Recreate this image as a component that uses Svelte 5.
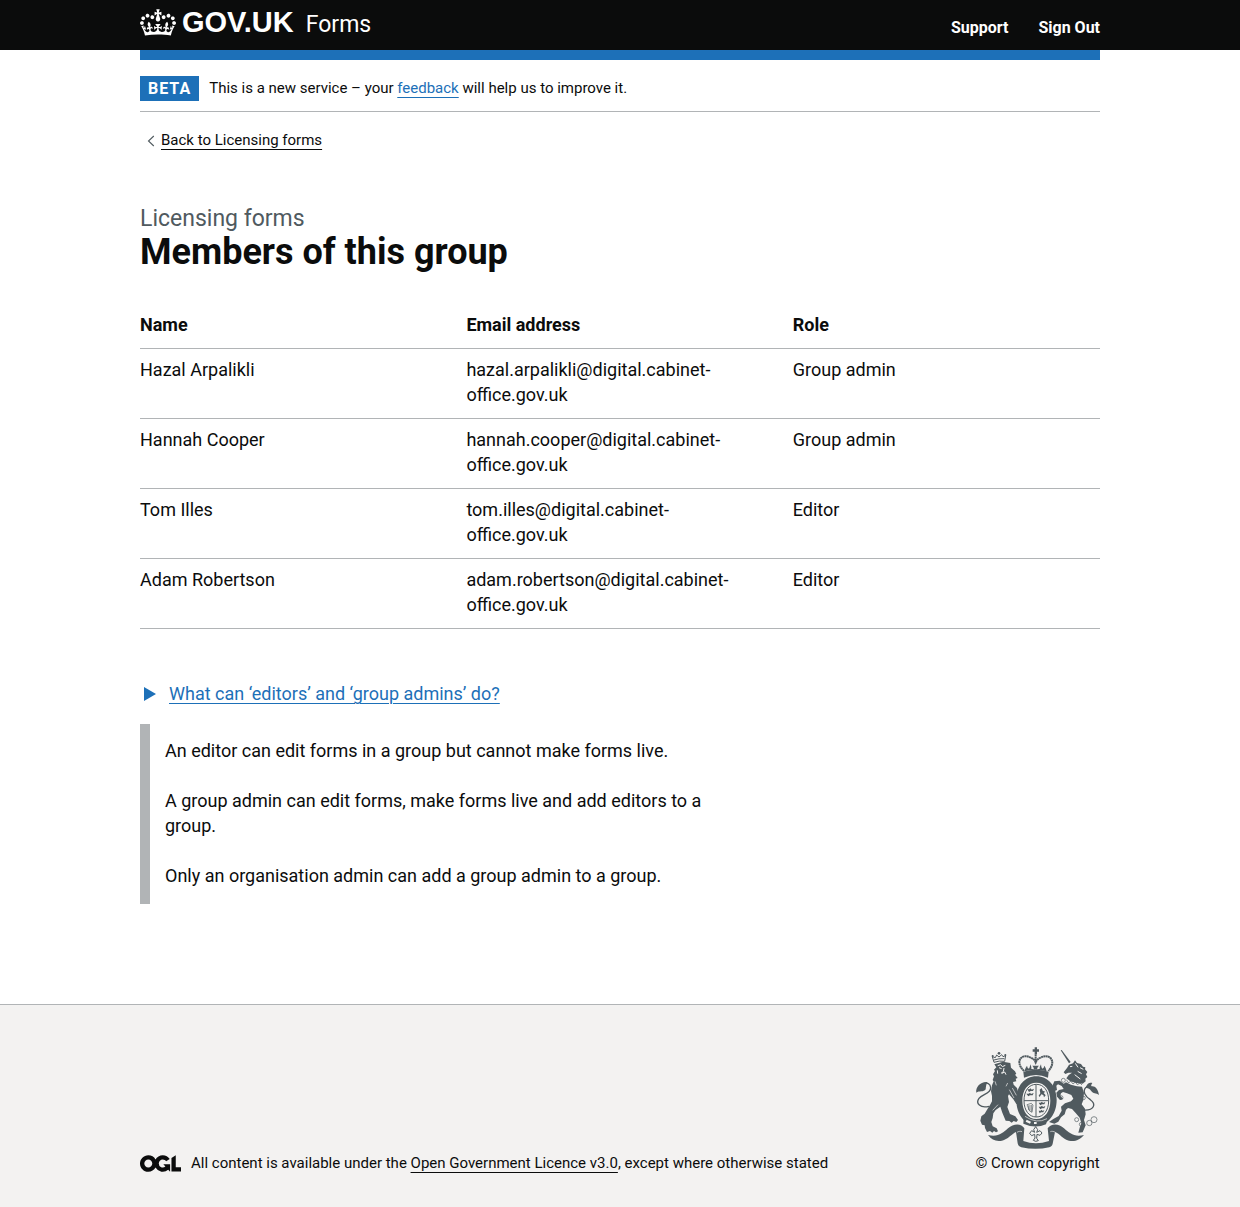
<script>
  const members = [
    { name: 'Hazal Arpalikli', email: 'hazal.arpalikli@digital.cabinet-office.gov.uk', role: 'Group admin' },
    { name: 'Hannah Cooper', email: 'hannah.cooper@digital.cabinet-office.gov.uk', role: 'Group admin' },
    { name: 'Tom Illes', email: 'tom.illes@digital.cabinet-office.gov.uk', role: 'Editor' },
    { name: 'Adam Robertson', email: 'adam.robertson@digital.cabinet-office.gov.uk', role: 'Editor' }
  ];
</script>

<header class="header">
  <div class="container header-inner">
    <a class="brand" href="#home">
      <svg class="crown" viewBox="0 0 132 97" width="36" height="27" aria-hidden="true">
        <path fill="currentColor" fill-rule="evenodd" d="M25 30.2c3.5 1.5 7.7-.2 9.1-3.7 1.5-3.6-.2-7.8-3.9-9.2-3.6-1.4-7.6.3-9.1 3.9-1.4 3.5.3 7.5 3.9 9zM9 39.5c3.6 1.5 7.8-.2 9.2-3.7 1.5-3.6-.2-7.8-3.9-9.1-3.6-1.5-7.6.2-9.1 3.8-1.4 3.5.3 7.5 3.8 9zM4.4 57.2c3.5 1.5 7.7-.2 9.1-3.8 1.5-3.6-.2-7.7-3.9-9.1-3.5-1.5-7.6.3-9.1 3.8-1.4 3.5.3 7.6 3.9 9.1zm38.3-21.4c3.5 1.5 7.7-.2 9.1-3.8 1.5-3.6-.2-7.7-3.9-9.1-3.6-1.5-7.6.3-9.1 3.8-1.3 3.6.4 7.7 3.9 9.1zm64.4-5.6c-3.6 1.5-7.8-.2-9.1-3.7-1.5-3.6.2-7.8 3.8-9.2 3.6-1.4 7.7.3 9.2 3.9 1.3 3.5-.4 7.5-3.9 9zm15.9 9.3c-3.6 1.5-7.7-.2-9.1-3.7-1.5-3.6.2-7.8 3.7-9.1 3.6-1.5 7.7.2 9.2 3.8 1.5 3.5-.3 7.5-3.8 9zm4.7 17.7c-3.6 1.5-7.8-.2-9.2-3.8-1.5-3.6.2-7.7 3.9-9.1 3.6-1.5 7.7.3 9.2 3.8 1.3 3.5-.4 7.6-3.9 9.1zM89.3 35.8c-3.6 1.5-7.8-.2-9.2-3.8-1.4-3.6.2-7.7 3.9-9.1 3.6-1.5 7.7.3 9.2 3.8 1.4 3.6-.3 7.7-3.9 9.1zM69.7 17.7l8.9 4.7V9.3l-8.9 2.8c-.2-.3-.5-.6-.9-.9L72.4 0H59.6l3.5 11.2c-.3.3-.6.5-.9.9l-8.8-2.8v13.1l8.8-4.7c.3.3.6.7.9.9l-5 15.4v.1c-.2.8-.4 1.6-.4 2.4 0 4.1 3.1 7.5 7 8.1h.2c.3 0 .7.1 1 .1.4 0 .7 0 1-.1h.2c4-.6 7.1-4.1 7.1-8.1 0-.8-.1-1.7-.4-2.4V34l-5.1-15.4c.4-.2.7-.6 1-.9zM66 92.8c16.9 0 32.8 1.1 47.1 3.2 4-16.9 8.9-26.7 14-33.5l-9.6-3.4c1 4.9 1.1 7.2 0 10.2-1.5-1.4-3-4.3-4.2-8.7L108.6 76c2.8-2 5-3.2 7.5-3.3-4.4 9.4-10 11.9-13.6 11.2-4.3-.8-6.3-4.6-5.6-7.9 1-4.7 5.7-5.9 8-.5 4.3-8.7-3-11.4-7.6-8.8 7.1-7.2 7.9-13.5 2.1-21.1-8 6.1-8.1 12.3-4.5 20.8-4.7-5.4-12.1-2.5-9.5 6.2 3.4-5.2 7.9-2 7.2 3.1-.6 4.3-6.4 7.8-13.5 7.2-10.3-.9-10.9-8-11.2-13.8 2.5-.5 7.1 1.8 11 7.3L80.2 60c-4.1 4.4-8 5.3-12.3 5.4 1.4-4.4 8-11.6 8-11.6H55.5s6.4 7.2 7.9 11.6c-4.2-.1-8-1-12.3-5.4l1.4 16.4c3.9-5.5 8.5-7.7 10.9-7.3-.3 5.8-.9 12.8-11.1 13.8-7.2.6-12.9-2.9-13.5-7.2-.7-5 3.8-8.3 7.1-3.1 2.7-8.7-4.6-11.6-9.4-6.2 3.7-8.5 3.6-14.7-4.6-20.8-5.8 7.6-5 13.9 2.2 21.1-4.7-2.6-11.9.1-7.7 8.8 2.3-5.5 7.1-4.2 8.1.5.7 3.3-1.3 7.1-5.7 7.9-3.5.7-9-1.8-13.5-11.2 2.5.1 4.7 1.3 7.5 3.3l-4.7-15.4c-1.2 4.4-2.7 7.2-4.3 8.7-1.1-3-.9-5.3 0-10.2l-9.5 3.4c5 6.9 9.9 16.7 14 33.5 14.8-2.1 30.8-3.2 47.7-3.2z" />
      </svg>
      <span class="wordmark">GOV.UK</span>
      <span class="product">Forms</span>
    </a>
    <nav class="header-nav" aria-label="Account">
      <a href="#support">Support</a>
      <a href="#sign-out">Sign Out</a>
    </nav>
  </div>
</header>

<div class="container">
  <div class="blue-bar"></div>
  <div class="phase">
    <strong class="tag">BETA</strong>
    <span>This is a new service – your <a class="link" href="#feedback">feedback</a> will help us to improve it.</span>
  </div>
  <div class="back">
    <svg viewBox="0 0 8 12" width="8" height="12" aria-hidden="true"><path d="M6.8 1 1.5 6l5.3 5" fill="none" stroke="#505a5f" stroke-width="1.1" /></svg>
    <a href="#group">Back to Licensing forms</a>
  </div>

  <main>
    <p class="caption">Licensing forms</p>
    <h1>Members of this group</h1>

    <table>
      <thead>
        <tr><th scope="col">Name</th><th scope="col">Email address</th><th scope="col">Role</th></tr>
      </thead>
      <tbody>
        {#each members as member}
          <tr><td>{member.name}</td><td>{member.email}</td><td>{member.role}</td></tr>
        {/each}
      </tbody>
    </table>

    <details open>
      <summary>
        <svg viewBox="0 0 12 14" width="12" height="14" aria-hidden="true"><path d="M0 0l12 7-12 7z" fill="currentColor" /></svg>
        <span>What can ‘editors’ and ‘group admins’ do?</span>
      </summary>
      <div class="details-text">
        <p>An editor can edit forms in a group but cannot make forms live.</p>
        <p>A group admin can edit forms, make forms live and add editors to a group.</p>
        <p>Only an organisation admin can add a group admin to a group.</p>
      </div>
    </details>
  </main>
</div>

<footer>
  <div class="container footer-inner">
    <div class="licence">
      <svg viewBox="0 0 483.2 195.7" width="41" height="17" aria-hidden="true">
        <path fill="currentColor" d="M421.5 142.8V.1l-50.7 32.3v161.1h112.4v-50.7zm-122.3-9.6A47.12 47.12 0 0 1 221 97.8c0-26 21.1-47.1 47.1-47.1 16.7 0 31.4 8.7 39.7 21.8l42.7-27.2A97.63 97.63 0 0 0 268.1 0c-36.5 0-68.3 20.1-85.1 49.7A98 98 0 0 0 97.8 0C43.9 0 0 43.9 0 97.8s43.9 97.8 97.8 97.8c36.5 0 68.3-20.1 85.1-49.7a97.76 97.76 0 0 0 149.6 25.4l19.4 22.2h3v-87.8h-80l24.3 27.5zM97.8 145c-26 0-47.1-21.1-47.1-47.1s21.1-47.1 47.1-47.1 47.1 21.1 47.1 47.1S123.8 145 97.8 145" />
      </svg>
      <span>All content is available under the <a href="#licence">Open Government Licence v3.0</a>, except where otherwise stated</span>
    </div>
    <a class="copyright" href="#copyright">
      <svg viewBox="46 35 375 312" width="125" height="104" aria-hidden="true">
        <g fill="#505a5f">
          <!-- central crown -->
          <path d="M225 36h7v6h6v7h-6v8h-7v-8h-6v-7h6zM191 109q38-11 76 0l-2 18q-36-16-72 0z" />
          <path d="M194 108q3-11 8-17 1 8 6 9 3-5 4-13 4 8 3 14l8 1q-1-7-5-11h20q-5 4-6 11l8-1q-1-6 4-14 0 8 4 13 5-2 6-9 5 6 7 17-33-9-67 0z" />
          <path d="M193 107C163 78 187 52 213 67q11 4 15 14 4-10 15-14c26-15 50 11 23 40M228 57v28" fill="none" stroke="#505a5f" stroke-width="6" stroke-dasharray="6 1" />
          <!-- ribbon -->
          <path d="M85 299c30 8 44-6 60-20 16-15 40-16 49 0l-3 38q37 14 77 0l-4-38c10-16 34-15 49 0 16 14 31 28 60 20-14 16-27 20-45 17-18-4-28-21-42-26l-7 35c-1 6-5 9-10 11q-41 9-84 0c-7-2-10-6-11-12l-5-34c-12 5-25 23-42 26-19 3-30-2-42-17z" />
          <path d="M172 291c4-3 11-4 15-2M287 291c-4-3-11-4-15-2" fill="none" stroke="#f3f2f1" stroke-width="2" />
          <!-- garter and shield -->
          <path fill-rule="evenodd" d="M230 123c36 0 61 30 61 71s-25 76-61 76-60-35-60-76 24-71 60-71zm0 19c-26 0-42 22-42 54s17 55 42 55 42-23 42-55-16-54-42-54z" />
          <path d="M230 147c23 0 37 20 37 49s-15 49-37 49-37-20-37-49 14-49 37-49zM229 147v98M193 196h74" fill="none" stroke="#505a5f" stroke-width="3" />
          <path d="M203 162h6l4-3 3 4 7-3-3 7h-7l-5 3zm-3 13h7l4-3 3 4 8-3-3 7h-8l-5 3zm37 27h6l4-3 3 4 7-3-3 7h-7l-5 3zm0 12h6l4-3 3 4 7-3-3 7h-7l-5 3zm0 12h6l3-3 3 4 5-3-3 7h-7l-4 3zM240 163l6-5 3 8 8 3-5 4 6 7-5 6-2-7-6-2-5 8-3-4 5-7z" />
          <path d="M202 208l13-4 5 5-3 22-7-4zM207 210v14M211 209v17M216 208v21" fill="none" stroke="#505a5f" stroke-width="2" />
          <path d="M192 247q38 24 72 4l-5 16q-33 14-68-2z" />
          <path fill="#f3f2f1" d="M201 253l13 6-3 6-13-6zm22 7h8v6h-8z" />
          <path d="M196 243q35 24 66 7" fill="none" stroke="#f3f2f1" stroke-width="2" />
          <!-- plant badge -->
          <path d="M228 274l6 9-3 8 10-5 6 7-6 7-9-3-1 12 5 7-8 2-7-3 5-7-1-11-9 4-6-7 6-8 9 5-3-8z" fill="none" stroke="#505a5f" stroke-width="3" />
          <!-- lion -->
          <path d="M103 81l-5-17 9 3 4-8 7 6 8-7 4 6 8-3-3 17q-16-3-32 3zM103 74q14-5 31-4" fill="none" stroke="#505a5f" stroke-width="3" />
          <circle cx="99" cy="62" r="3" /><circle cx="118" cy="54" r="4" /><circle cx="137" cy="59" r="3" />
          <path d="M104 87L130 79 152 83 154 97 166 108 170 116 166 118 174 128 168 130 170 138 160 140 162 148 172 158 177 177 187 188 185 199 179 207 170 206 161 192 148 177 145 182 148 200 143 215 151 236 167 243 175 254 170 260 162 257 156 262 149 257 138 256 128 232 122 214 108 224 101 234 99 248 95 260 99 273 111 279 115 288 109 291 103 287 98 292 91 287 82 290 76 278 75 270 67 268 62 256 65 243 75 235 83 222 91 209 97 198 97 182 94 168 97 150 102 138 99 134 103 123 100 117 106 107 103 103 110 96z" />
          <path d="M114 91l9-3 5 6 9-4M118 97l8 3M133 98l-2 11-7 5M127 114l8-4 4 8M113 105l1 10" fill="none" stroke="#f3f2f1" stroke-width="3" />
          <path d="M158 158l12 22M149 163l14 25M115 208l-16 17M106 138l4 12M144 143l-5 10" fill="none" stroke="#f3f2f1" stroke-width="2" />
          <path d="M88 213c-26 7-41-9-30-24 9-12 36-14 35-32-1-13-11-16-20-12" fill="none" stroke="#505a5f" stroke-width="4" />
          <path d="M84 140c-20-3-37 14-34 32 8-7 22 0 28-10 1-8 1-16 6-22z" />
          <!-- unicorn -->
          <path d="M303 45l3-1 27 36-5 4z" />
          <path d="M312 111L322 98 328 88 340 84 346 75 352 83 364 86 370 94 377 96 376 102 383 110 379 117 383 125 377 130 378 138 369 145 350 143 332 138 320 129 327 119 337 112 326 112 317 116z" />
          <path d="M319 141L334 148 352 153 367 154 373 172 371 194 366 207 376 220 378 237 373 254 378 270 369 291 356 292 360 277 365 263 360 247 348 233 337 221 325 218 319 223 315 237 304 246 296 259 284 265 268 260 281 251 297 242 306 226 304 214 316 204 334 198 341 190 335 179 322 174 310 170 304 174 302 181 310 190 302 194 292 184 290 172 298 164 312 161 306 152 295 147 290 151 292 164 285 167 278 152 284 138 300 136 312 145z" />
          <path d="M372 224c32 2 38-18 20-31-15-10-24-24-14-36q8-7 17-1" fill="none" stroke="#505a5f" stroke-width="4" />
          <path d="M378 158c4-16 15-17 20-15-3 4-4 7-3 10 10-3 20 7 23 26-9-8-17-3-24-13-4-6-10-9-16-8z" />
          <path d="M331 94l7-1M347 84l8 12M354 108l12 7M361 97l10 5M345 118l17 13" fill="none" stroke="#f3f2f1" stroke-width="3" />
          <g fill="none" stroke="#505a5f" stroke-width="2">
            <path d="M320 133l7 10 6-6 7 9 7-6 6 8 8-5 6 6" />
            <circle cx="311" cy="135" r="6" /><circle cx="372" cy="188" r="5" /><circle cx="351" cy="253" r="6" /><circle cx="365" cy="267" r="6" /><circle cx="389" cy="263" r="8" /><circle cx="403" cy="253" r="9" /><circle cx="304" cy="187" r="6" />
          </g>
        </g>
      </svg>
      <span>© Crown copyright</span>
    </a>
  </div>
</footer>

<style>
  :global(body) { background: #fff; color: #0b0c0c; font: 18px/25px Roboto, "Noto Sans", sans-serif; }
  a { color: inherit; text-decoration-thickness: 1px; text-underline-offset: 4px; }
  .container { max-width: 960px; margin: 0 auto; }
  .header { background: #0b0c0c; color: #fff; }
  .header-inner { display: flex; justify-content: space-between; align-items: center; height: 50px; }
  .header a { text-decoration: none; }
  .brand { display: flex; align-items: center; height: 40px; padding-bottom: 6px; }
  .wordmark { margin-left: 6px; font: bold 29px/32px "Liberation Sans", Arial, sans-serif; }
  .product { margin-left: 12px; font-size: 23px; line-height: 28px; padding-top: 6px; }
  .header-nav { display: flex; gap: 30px; padding-top: 4px; font-size: 16px; font-weight: 700; }
  .blue-bar { height: 10px; background: #1d70b8; }
  .phase { display: flex; align-items: center; gap: 10px; padding: 16px 0 10px; border-bottom: 1px solid #b1b4b6; font-size: 15px; }
  .tag { background: #1d70b8; color: #fff; padding: 0 8px; font-size: 16px; letter-spacing: 1px; }
  .link { color: #1d70b8; }
  .back { display: flex; align-items: center; gap: 6px; padding: 16px 0 0 7px; font-size: 15px; }
  main { padding: 52px 0 100px; }
  h1 { margin: 0; font-size: 36px; line-height: 40px; font-weight: 700; }
  .caption { margin: 0; color: #505a5f; font-size: 23px; line-height: 27px; }
  table { width: 100%; margin-top: 32px; border-collapse: collapse; table-layout: fixed; }
  th, td { box-sizing: border-box; padding: 8px 40px 11px 0; text-align: left; vertical-align: top; border-bottom: 1px solid #b1b4b6; }
  th:nth-child(-n + 2) { width: 34%; }
  th:last-child, td:last-child { padding-right: 0; }
  details { margin-top: 52px; max-width: 600px; }
  summary { display: flex; align-items: center; gap: 13px; padding-left: 4px; color: #1d70b8; list-style: none; cursor: pointer; }
  summary span { text-decoration: underline; text-decoration-thickness: 1px; text-underline-offset: 3px; }
  .details-text { margin-top: 18px; padding: 14px 15px 16px; border-left: 10px solid #b1b4b6; }
  .details-text p { margin: 0 0 25px; }
  .details-text p:last-child { margin: 0; }
  footer { background: #f3f2f1; border-top: 1px solid #b1b4b6; }
  .footer-inner { display: flex; align-items: flex-end; justify-content: space-between; padding: 42px 0 31px; font-size: 15px; }
  .licence { display: flex; align-items: center; gap: 10px; }
  .copyright { display: flex; flex-direction: column; align-items: center; text-decoration: none; }
</style>
